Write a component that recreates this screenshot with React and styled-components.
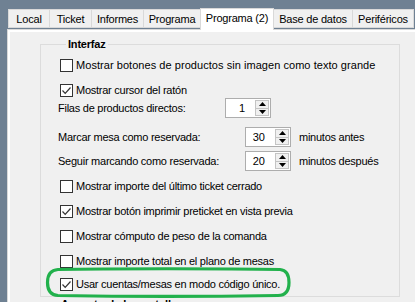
import React from "react";
import styled, { createGlobalStyle } from "styled-components";

const Global = createGlobalStyle`
  html, body {
    margin: 0;
    padding: 0;
    background: #6f8193;
  }
  body {
    font-family: "Liberation Sans", Arial, sans-serif;
    font-size: 11px;
    color: #000;
  }
`;

const Screen = styled.div`
  width: 415px;
  height: 302px;
  overflow: hidden;
  background: #6f8193;
  display: flex;
  flex-direction: column;
`;

const TabStrip = styled.div`
  display: flex;
  align-items: flex-end;
  flex-shrink: 0;
  height: 29px;
  padding-left: 8px;
  position: relative;
  z-index: 2;
`;

const Tab = styled.div`
  box-sizing: border-box;
  width: ${(p) => p.$w}px;
  height: ${(p) => (p.$active ? 22 : 19)}px;
  margin-bottom: ${(p) => (p.$active ? -1 : 1)}px;
  margin-left: -1px;
  background: ${(p) => (p.$active ? "#fff" : "#f0f0f0")};
  border: 1px solid #d9d9d9;
  border-bottom: ${(p) => (p.$active ? "none" : "1px solid #d9d9d9")};
  display: flex;
  align-items: center;
  justify-content: center;
  white-space: nowrap;
  padding-bottom: ${(p) => (p.$active ? 3 : 0)}px;
  letter-spacing: -0.2px;
  &:first-child {
    margin-left: 0;
  }
`;

const Panel = styled.div`
  flex: 1 0 auto;
  margin-left: 7px;
  margin-right: -4px;
  border: 1px solid #d9d9d9;
  background: #fff;
  padding: 2px 0 0 2px;
  display: flex;
`;

const Page = styled.div`
  flex: 1;
  background: #f0f0f0;
  padding: 5px 0 0 30px;
`;

const GroupBox = styled.fieldset`
  box-sizing: border-box;
  width: 360px;
  margin: 0;
  padding: 4px 0 2px 19px;
  border: 1px solid #dcdcdc;
  display: flex;
  flex-direction: column;
`;

const Legend = styled.legend`
  font-weight: bold;
  font-size: 11px;
  line-height: 14px;
  padding: 0 2px;
  margin-left: 6px;
  letter-spacing: -0.2px;
`;

const Row = styled.div`
  position: relative;
  height: 20px;
  margin-top: ${(p) => p.$mt || 0}px;
  display: flex;
  align-items: center;
  white-space: nowrap;
  letter-spacing: ${(p) => (p.$wide ? 0.05 : -0.25)}px;
`;

const Box = styled.span`
  box-sizing: border-box;
  width: 13px;
  height: 13px;
  border: 1px solid #333;
  background: #fff;
  margin-right: 3px;
  display: flex;
  align-items: center;
  justify-content: center;
  flex-shrink: 0;
`;

const Label = styled.span`
  width: ${(p) => p.$w}px;
  margin-left: -2px;
  flex-shrink: 0;
`;

const SpinBox = styled.div`
  box-sizing: border-box;
  width: 46px;
  height: 20px;
  border: 1px solid #adadad;
  background: #fff;
  display: flex;
  align-items: stretch;
  padding: 1px;
`;

const SpinValue = styled.span`
  flex: 1;
  text-align: right;
  padding-right: 10px;
  line-height: 16px;
  letter-spacing: 0;
`;

const SpinButtons = styled.div`
  box-sizing: border-box;
  width: 14px;
  border: 1px solid #c4c4c4;
  background: #f0f0f0;
  display: flex;
  flex-direction: column;
`;

const SpinHalf = styled.div`
  flex: 1;
  display: flex;
  align-items: center;
  justify-content: center;
  & + & {
    border-top: 1px solid #c4c4c4;
  }
`;

const Suffix = styled.span`
  margin-left: 8px;
`;

const Highlight = styled.svg`
  position: absolute;
  left: -14px;
  top: -6px;
  overflow: visible;
  pointer-events: none;
`;

const NextGroup = styled.div`
  margin: 1px 0 0 21px;
  font-weight: bold;
  line-height: 13px;
  white-space: nowrap;
`;

const Check = ({ on }) => (
  <Box>
    {on && (
      <svg width="11" height="11" viewBox="0 0 11 11">
        <path d="M1.5 5.5 L4.2 8.3 L9.5 2.5" fill="none" stroke="#333" strokeWidth="1.2" />
      </svg>
    )}
  </Box>
);

const CheckRow = ({ on, mt, wide, children, marked }) => (
  <Row $mt={mt} $wide={wide}>
    <Check on={on} />
    <span>{children}</span>
    {marked && (
      <Highlight width="244" height="29">
        <path
          d="M12 1.5 C60 0.5 180 0.5 234 1.5 C241 2 243 8 243 14.5 C243 22 240 27.5 232 27.5 C170 28.5 70 28.5 12 27.5 C4 27 1.5 21 1.5 14.5 C1.5 7 4 2 12 1.5 Z"
          fill="none"
          stroke="#22b14c"
          strokeWidth="3.2"
        />
      </Highlight>
    )}
  </Row>
);

const Arrow = ({ up }) => (
  <svg width="7" height="4" viewBox="0 0 7 4">
    <path d={up ? "M3.5 0 L7 4 L0 4 Z" : "M0 0 L7 0 L3.5 4 Z"} fill="#000" />
  </svg>
);

const Spinner = ({ value }) => (
  <SpinBox>
    <SpinValue>{value}</SpinValue>
    <SpinButtons>
      <SpinHalf>
        <Arrow up />
      </SpinHalf>
      <SpinHalf>
        <Arrow />
      </SpinHalf>
    </SpinButtons>
  </SpinBox>
);

const tabs = [
  { label: "Local", w: 42 },
  { label: "Ticket", w: 43 },
  { label: "Informes", w: 53 },
  { label: "Programa", w: 58 },
  { label: "Programa (2)", w: 74, active: true },
  { label: "Base de datos", w: 80 },
  { label: "Periféricos", w: 62 },
];

export default function App() {
  return (
    <Screen>
      <Global />
      <TabStrip>
        {tabs.map((t) => (
          <Tab key={t.label} $w={t.w} $active={t.active}>
            {t.label}
          </Tab>
        ))}
      </TabStrip>
      <Panel>
        <Page>
          <GroupBox>
            <Legend>Interfaz</Legend>
            <CheckRow wide>Mostrar botones de productos sin imagen como texto grande</CheckRow>
            <CheckRow on mt={5}>Mostrar cursor del ratón</CheckRow>
            <Row $mt={-2}>
              <Label $w={167}>Filas de productos directos:</Label>
              <Spinner value="1" />
            </Row>
            <Row $mt={9}>
              <Label $w={187}>Marcar mesa como reservada:</Label>
              <Spinner value="30" />
              <Suffix>minutos antes</Suffix>
            </Row>
            <Row $mt={4}>
              <Label $w={187}>Seguir marcando como reservada:</Label>
              <Spinner value="20" />
              <Suffix>minutos después</Suffix>
            </Row>
            <CheckRow mt={5}>Mostrar importe del último ticket cerrado</CheckRow>
            <CheckRow on mt={5}>Mostrar botón imprimir preticket en vista previa</CheckRow>
            <CheckRow mt={5}>Mostrar cómputo de peso de la comanda</CheckRow>
            <CheckRow mt={5}>Mostrar importe total en el plano de mesas</CheckRow>
            <CheckRow on mt={3} marked>Usar cuentas/mesas en modo código único.</CheckRow>
          </GroupBox>
          <NextGroup>Aspecto de la pantalla</NextGroup>
        </Page>
      </Panel>
    </Screen>
  );
}
